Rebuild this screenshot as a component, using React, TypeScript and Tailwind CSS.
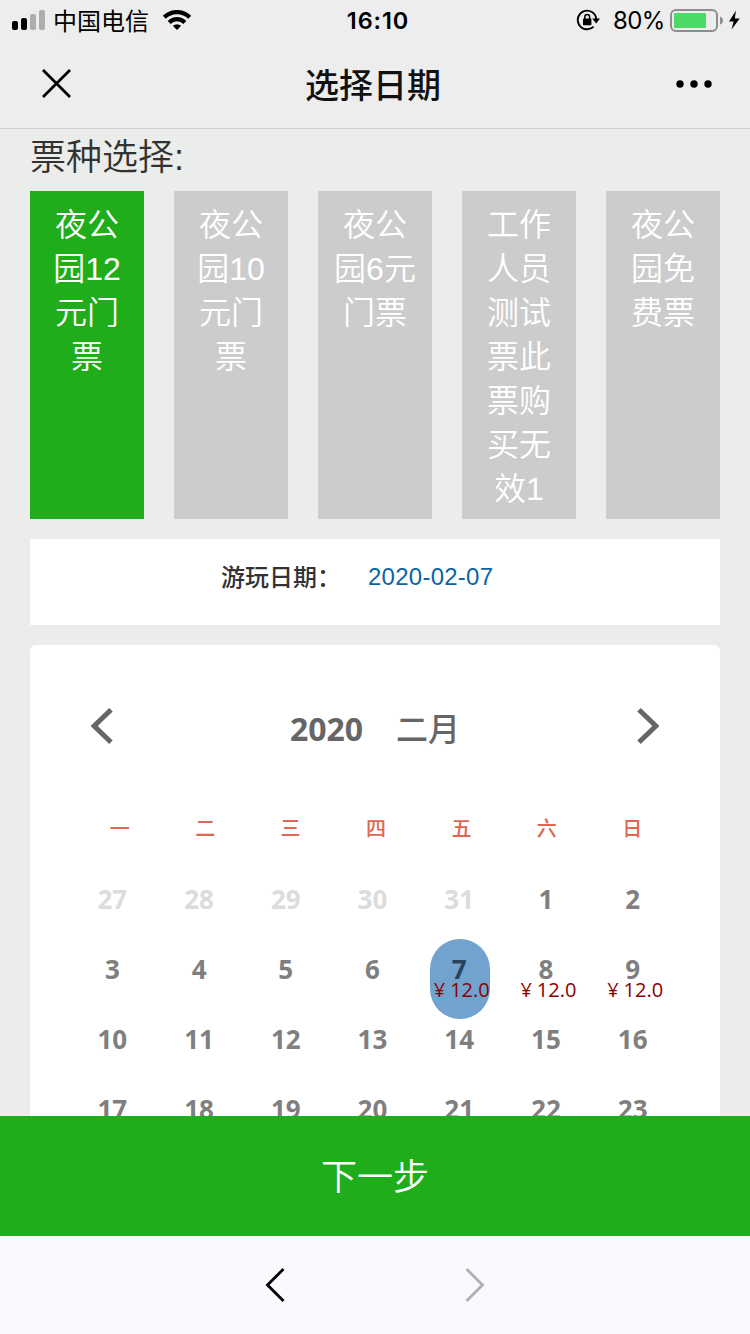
import React from "react";

const tickets = ["夜公园12元门票", "夜公园10元门票", "夜公园6元门票", "工作人员测试票此票购买无效1", "夜公园免费票"];
const weekdays = ["一", "二", "三", "四", "五", "六", "日"];

type Day = { n: number; muted?: boolean; price?: string; selected?: boolean };

const days: Day[] = [
  ...[27, 28, 29, 30, 31].map((n) => ({ n, muted: true })),
  ...Array.from({ length: 23 }, (_, i) => {
    const n = i + 1;
    return { n, price: n >= 7 && n <= 9 ? "12.0" : undefined, selected: n === 7 };
  }),
];

function StatusBar() {
  return (
    <div className="flex h-10 items-center text-black">
      <svg className="ml-3 h-5 w-[34px]" viewBox="0 0 34 20">
        <rect x="0" y="11" width="6" height="9" rx="2" />
        <rect x="9" y="8" width="6" height="12" rx="2" />
        <rect x="18" y="4" width="6" height="16" rx="2" fill="#adadad" />
        <rect x="27" y="0" width="6" height="20" rx="2" fill="#adadad" />
      </svg>
      <span className="ml-[7px] w-[104px] pt-[3px] text-[24px] leading-10 whitespace-nowrap">中国电信</span>
      <svg className="ml-[5px] h-5 w-[30px]" viewBox="0 0 30 20" fill="none" stroke="#000" strokeWidth="4.2">
        <path d="M2.3 7.3 A18 18 0 0 1 27.7 7.3" />
        <path d="M7.2 12.4 A11 11 0 0 1 22.8 12.4" />
        <path d="M15 20 L10.8 15.8 Q15 12.6 19.2 15.8 Z" fill="#000" stroke="none" />
      </svg>
      <span className="ml-[153px] w-[66px] pt-[2px] text-center font-['Inter'] text-[23.5px] leading-10 font-semibold tracking-[0.9px] whitespace-nowrap">16:10</span>
      <svg className="ml-[165px] h-[22px] w-[24px]" viewBox="0 0 24 22">
        <path d="M17.6 17.6 A9.3 9.3 0 1 1 20.3 9.8" fill="none" stroke="#000" strokeWidth="1.9" />
        <path d="M16.2 9.6 H24 L20.2 14.4 Z" />
        <rect x="7" y="9.6" width="8.4" height="6.6" rx="0.8" />
        <path d="M8.8 10 V8 A2.4 2.4 0 0 1 13.6 8 V10" fill="none" stroke="#000" strokeWidth="1.5" />
      </svg>
      <span className="ml-[13px] w-[52px] pt-[2px] font-['Inter'] text-[24px] leading-10 tracking-[-0.6px] whitespace-nowrap">80%</span>
      <svg className="ml-[5px] h-6 w-[72px]" viewBox="0 0 72 24">
        <rect x="1" y="2" width="46" height="21" rx="5" fill="none" stroke="#8e8e90" strokeWidth="2" />
        <rect x="4" y="5" width="32" height="15" rx="1" fill="#4cd964" />
        <path d="M50 8.5 Q53 9.5 53 12.5 T50 16.5 Z" fill="#8e8e90" />
        <path d="M66 2.5 L59 13.4 H63.6 L61.5 21.5 L69.8 10.5 H64.8 Z" />
      </svg>
    </div>
  );
}

function NavBar() {
  return (
    <div className="flex h-[88px] items-center justify-between pr-[38px] pl-[42px]">
      <svg className="h-[30px] w-[30px]" viewBox="0 0 30 30" stroke="#000" strokeWidth="2.8">
        <path d="M1 1 L28 28 M28 1 L1 28" />
      </svg>
      <h1 className="pt-[3px] pr-[2px] text-[34px] leading-[88px] font-medium text-[#111]">选择日期</h1>
      <svg className="h-2 w-9" viewBox="0 0 36 8">
        <circle cx="4" cy="4" r="3.7" />
        <circle cx="18" cy="4" r="3.7" />
        <circle cx="32" cy="4" r="3.7" />
      </svg>
    </div>
  );
}

function TicketLabel({ text }: { text: string }) {
  return (
    <span className="w-full">
      {text.split(/(\d+)/).map((part, i) => (
        <span key={i} className={/\d/.test(part) ? "font-normal" : "font-[350]"}>
          {part}
        </span>
      ))}
    </span>
  );
}

function DayCell({ day }: { day: Day }) {
  const tone = day.muted ? "text-[#dcdcdc]" : day.selected ? "text-[#27445c]" : "text-[#7f7f7f]";
  return (
    <div className="flex h-[70px] justify-center">
      <div className={`flex h-20 w-[60px] shrink-0 flex-col items-center rounded-[30px] ${day.selected ? "bg-[#72a3cf]" : ""}`}>
        <span className={`mt-[10px] h-10 pr-[2px] text-[26px] leading-10 font-bold ${tone}`}>{day.n}</span>
        {day.price && (
          <span className="-mt-[9px] flex gap-[5px] pl-[3px] text-[20px] leading-5 whitespace-nowrap text-[#8b0000]">
            <span>¥</span>
            <span>{day.price}</span>
          </span>
        )}
      </div>
    </div>
  );
}

function Calendar() {
  return (
    <section className="mx-[30px] mt-5 h-[471px] overflow-hidden rounded-t-[6px] bg-white font-['Open_Sans','Noto_Sans_CJK_SC',sans-serif]">
      <div className="flex h-[162px] items-center justify-between px-[61px]">
        <svg className="h-9 w-[22px]" viewBox="0 0 22 36" fill="none" stroke="#666" strokeWidth="5">
          <path d="M20 1.8 L3.2 18 L20 34.2" />
        </svg>
        <div className="flex gap-[33px] pt-[6px] text-[32px] leading-10 font-bold text-[#666]">
          <span>2020</span>
          <span className="font-medium">二月</span>
        </div>
        <svg className="h-9 w-[22px]" viewBox="0 0 22 36" fill="none" stroke="#666" strokeWidth="5">
          <path d="M2 1.8 L18.8 18 L2 34.2" />
        </svg>
      </div>
      <div className="mr-[45px] ml-[47px] grid grid-cols-7 pt-[5px] text-center text-[20px] leading-[34px] font-medium text-[#e06650]">
        {weekdays.map((w) => (
          <span key={w}>{w}</span>
        ))}
      </div>
      <div className="mt-[23px] mr-[43px] ml-[40px] grid grid-cols-7">
        {days.map((d, i) => (
          <DayCell key={i} day={d} />
        ))}
      </div>
    </section>
  );
}

export default function App() {
  return (
    <div className="flex h-[1334px] w-[750px] flex-col overflow-hidden bg-[#ebedea] font-['Liberation_Sans','Noto_Sans_CJK_SC',sans-serif]">
      <header className="h-[129px] shrink-0 border-b border-[#d0d0d0] bg-[#ededed]">
        <StatusBar />
        <NavBar />
      </header>
      <main className="h-[987px] shrink-0 overflow-hidden">
        <h2 className="ml-[30px] h-[62px] pt-[2px] text-[36px] leading-[54px] font-[350] text-[#333]">票种选择:</h2>
        <div className="mx-[30px] grid h-[328px] grid-cols-5 gap-[30px]">
          {tickets.map((t, i) => (
            <button
              key={t}
              className={`flex items-start px-[15px] pt-3 pb-2 text-center text-[32px] leading-[44px] text-white ${i === 0 ? "bg-[#1fad1b]" : "bg-[#ccc]"}`}
            >
              <TicketLabel text={t} />
            </button>
          ))}
        </div>
        <div className="mx-[30px] mt-5 flex h-[86px] bg-white pl-[191px] text-[24px]">
          <span className="w-[147px] leading-[78px] font-medium text-[#333]">游玩日期：</span>
          <span className="leading-[76px] tracking-[0.25px] text-[#0a64a4]">2020-02-07</span>
        </div>
        <Calendar />
      </main>
      <button className="h-[120px] shrink-0 bg-[#1fad1b] pt-[3px] text-center text-[36px] leading-[117px] font-[350] text-white">下一步</button>
      <footer className="flex h-[98px] items-center justify-center gap-[180px] bg-[#f9f9fe]">
        <svg className="h-9 w-5" viewBox="0 0 20 36" fill="none" stroke="#000" strokeWidth="2.8">
          <path d="M18.5 2 L2.5 18 L18.5 34" />
        </svg>
        <svg className="h-9 w-5" viewBox="0 0 20 36" fill="none" stroke="#b0b0b4" strokeWidth="2.8">
          <path d="M1.5 2 L17.5 18 L1.5 34" />
        </svg>
      </footer>
    </div>
  );
}
